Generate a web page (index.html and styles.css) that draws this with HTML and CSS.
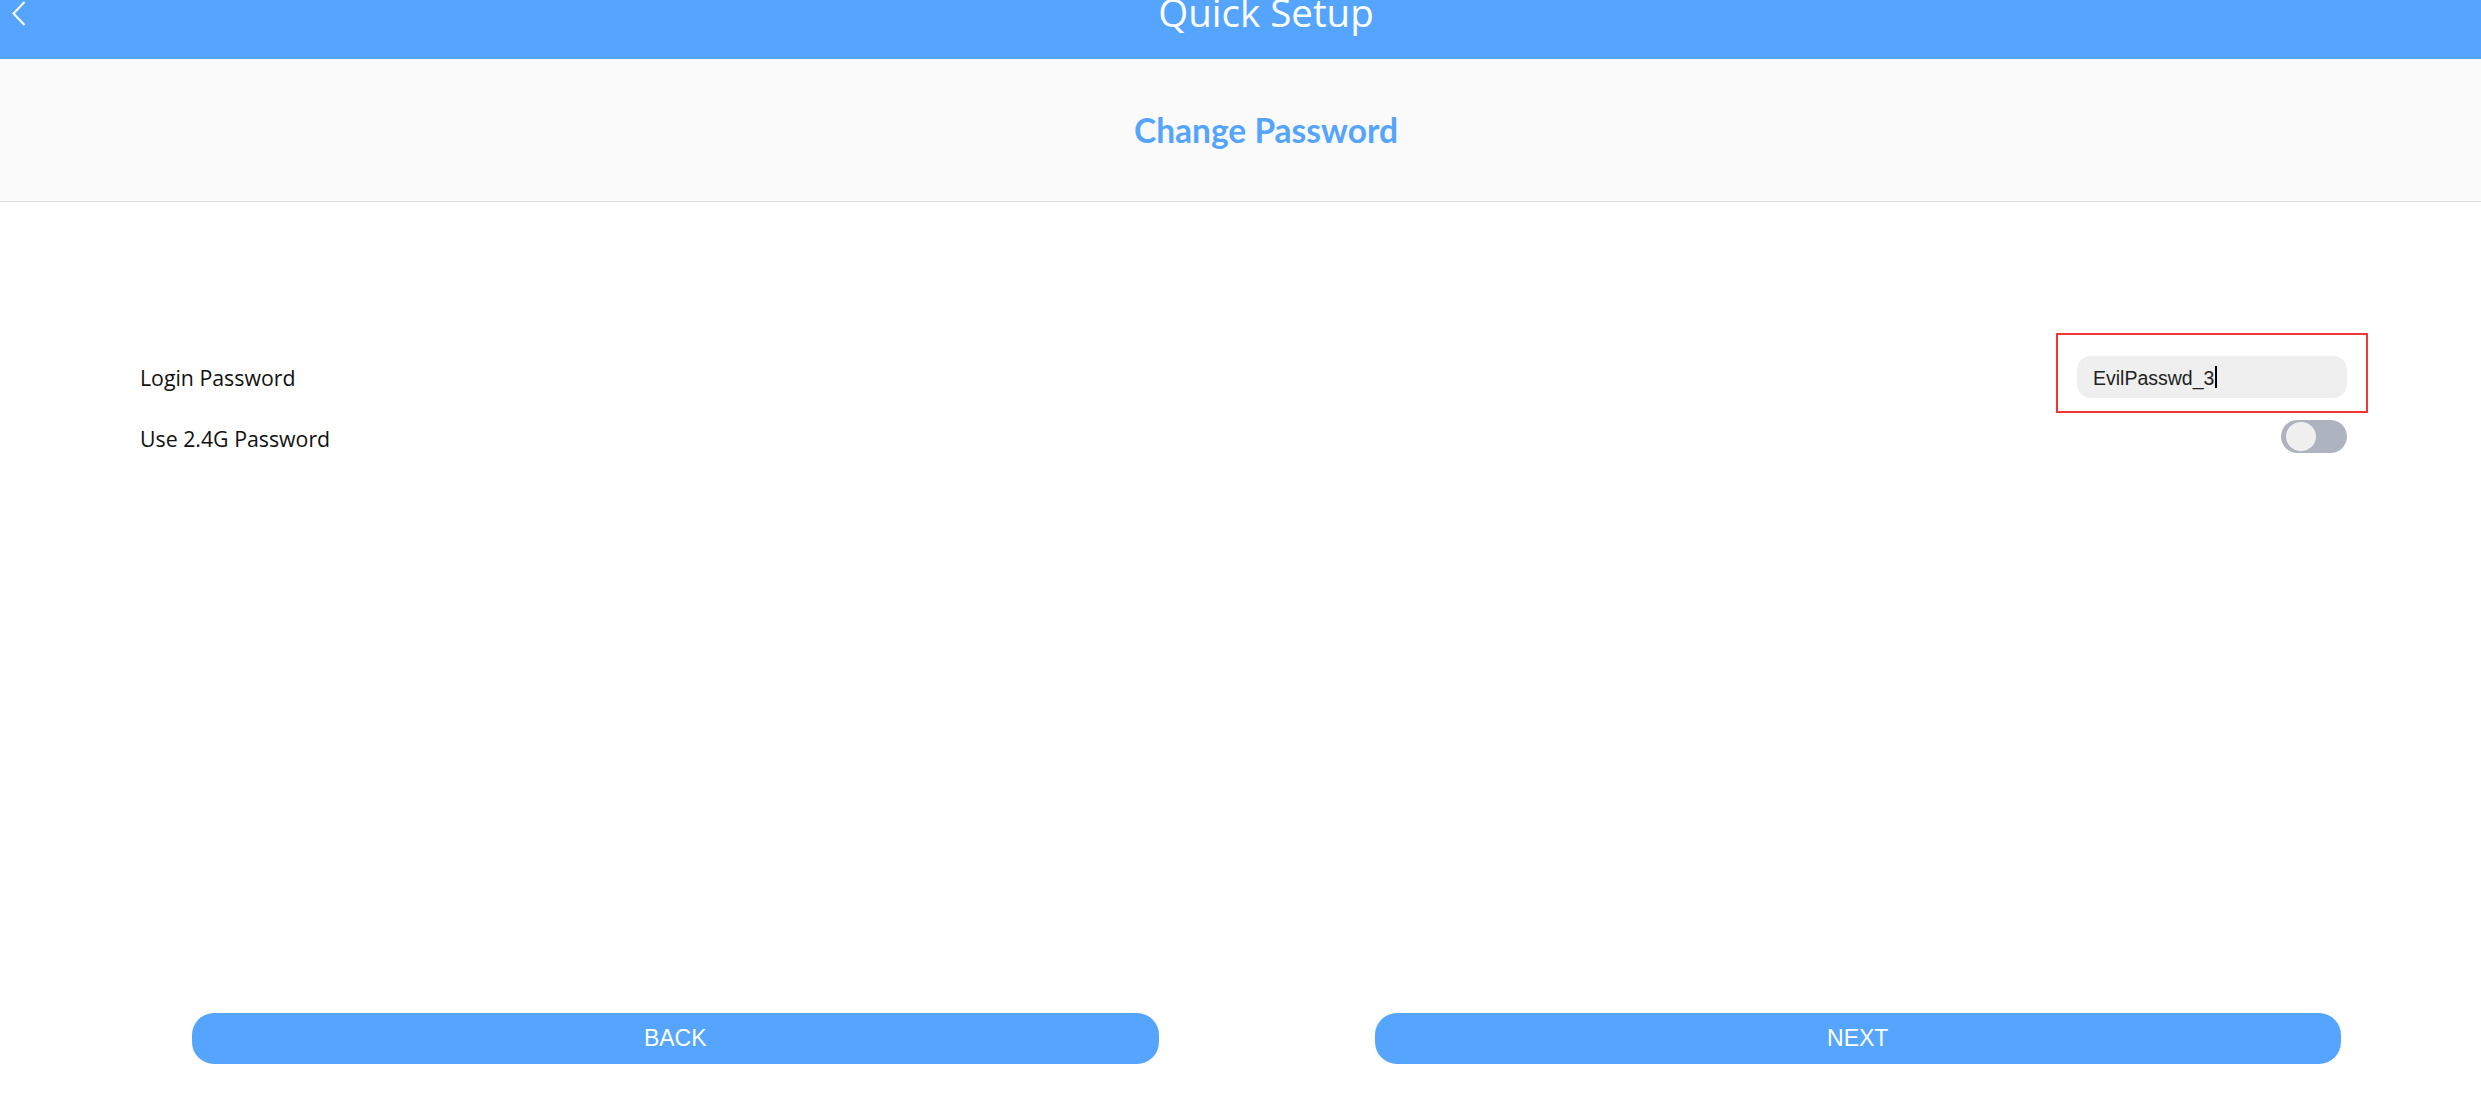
FILE: index.html
```html
<!DOCTYPE html>
<html lang="en">
<head>
<meta charset="utf-8">
<title>Quick Setup</title>
<link rel="stylesheet" href="styles.css">
</head>
<body>
<div class="page">
  <header class="topbar">
    <div class="back-icon">
      <svg width="14" height="26" viewBox="0 0 14 26"><polyline points="12.5,1 1.5,12.5 12.5,24" fill="none" stroke="#ffffff" stroke-width="2"/></svg>
    </div>
    <div class="title">Quick Setup</div>
    <div class="spacer"></div>
  </header>
  <section class="subheader">
    <h2 class="subtitle">Change Password</h2>
  </section>
  <main class="rows">
    <div class="row row-first">
      <span class="label">Login Password</span>
      <div class="field">
        <div class="input"><span class="value">EvilPasswd_3</span><span class="caret"></span></div>
      </div>
    </div>
    <div class="row row-second">
      <span class="label">Use 2.4G Password</span>
      <div class="toggle"><span class="knob"></span></div>
    </div>
  </main>
  <footer class="actions">
    <button class="btn">BACK</button>
    <button class="btn">NEXT</button>
  </footer>
</div>
</body>
</html>
```

FILE: styles.css
```css
html, body {
  margin: 0;
  padding: 0;
  overflow: hidden;
  background: #ffffff;
}

.page {
  width: 2532px;
  min-height: 100vh;
  display: flex;
  flex-direction: column;
  font-family: "Open Sans", "Noto Sans", sans-serif;
  color: #111;
}

.topbar {
  height: 59px;
  background: #55a5ff;
  display: grid;
  grid-template-columns: 1fr auto 1fr;
  align-items: start;
  overflow: hidden;
}

.back-icon {
  padding: 1px 0 0 12px;
  display: flex;
}

.title {
  color: #ffffff;
  font-size: 38.5px;
  line-height: 38px;
  margin-top: -7px;
  white-space: nowrap;
}

.subheader {
  height: 142px;
  background: #fafafa;
  border-bottom: 1px solid #dddddd;
  display: flex;
  align-items: center;
  justify-content: center;
}

.subtitle {
  margin: 0;
  font-family: "Lato", "Open Sans", sans-serif;
  font-weight: 700;
  font-size: 33.5px;
  color: #55a5ff;
}

.rows {
  padding: 154px 185px 0 140px;
  display: flex;
  flex-direction: column;
  gap: 22px;
}

.row {
  display: flex;
  align-items: center;
  justify-content: space-between;
}

.label {
  font-size: 21.3px;
  color: #111;
}

.row-second .label {
  margin-top: 4px;
}

.field {
  position: relative;
}

.field::after {
  content: "";
  position: absolute;
  top: -23px;
  left: -21px;
  right: -21px;
  bottom: -15px;
  border: 2px solid #f03838;
  pointer-events: none;
}

.input {
  width: 254px;
  height: 42px;
  padding-left: 16px;
  border-radius: 14px;
  background: #efefef;
  display: flex;
  align-items: center;
  font-family: "Liberation Sans", Arial, sans-serif;
  font-size: 19.5px;
  color: #222;
}

.value {
  margin-top: 2px;
}

.caret {
  display: inline-block;
  width: 2px;
  height: 22px;
  margin-left: 1px;
  background: #000;
}

.toggle {
  width: 66px;
  height: 33px;
  border-radius: 17px;
  background: #adb4c0;
  display: flex;
  align-items: center;
  padding-left: 5px;
  box-sizing: border-box;
}

.knob {
  width: 30px;
  height: 29px;
  border-radius: 50%;
  background: #f0f0f0;
}

.actions {
  margin-top: auto;
  padding: 0 191px 36px 192px;
  display: flex;
  gap: 216px;
}

.btn {
  flex: 1;
  height: 51px;
  border: none;
  border-radius: 22px;
  background: #55a5ff;
  color: #ffffff;
  font-family: "Liberation Sans", Arial, sans-serif;
  font-size: 23px;
  padding: 0;
}
```
